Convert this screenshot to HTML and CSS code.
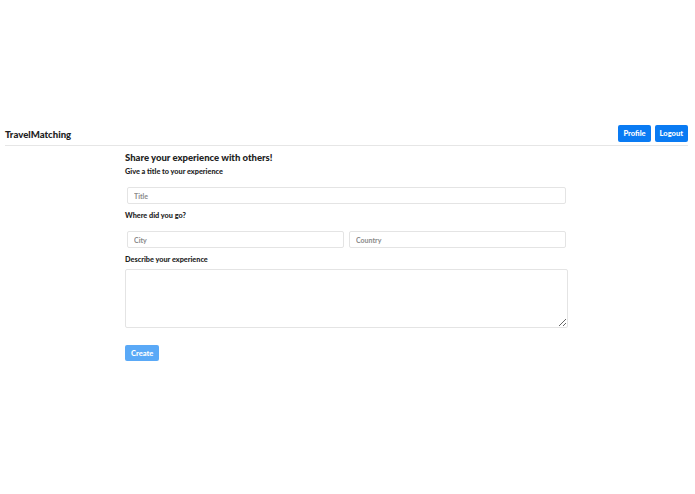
FILE: index.html
```html
<!DOCTYPE html>
<html>
<head>
<meta charset="utf-8">
<link rel="stylesheet" href="styles.css">
</head>
<body>
<div class="top-space"></div>
<nav class="navbar">
  <div class="brand">TravelMatching</div>
  <div class="nav-actions">
    <button class="btn btn-primary">Profile</button>
    <button class="btn btn-primary">Logout</button>
  </div>
</nav>
<main class="content">
  <h2 class="title">Share your experience with others!</h2>
  <label class="label">Give a title to your experience</label>
  <div class="field-row single">
    <input class="input" type="text" placeholder="Title">
  </div>
  <label class="label">Where did you go?</label>
  <div class="field-row double">
    <input class="input" type="text" placeholder="City">
    <input class="input" type="text" placeholder="Country">
  </div>
  <label class="label">Describe your experience</label>
  <textarea class="textarea"></textarea>
  <button class="btn btn-create">Create</button>
</main>
</body>
</html>
```
FILE: styles.css
```css
* { box-sizing: border-box; }
html, body { margin: 0; padding: 0; background: #fff; }
body {
  font-family: Lato, "Noto Sans", sans-serif;
  color: #212529;
}
.top-space { height: 122px; }
.navbar {
  display: flex;
  align-items: center;
  justify-content: space-between;
  margin: 0 7px 0 5px;
  height: 24px;
  border-bottom: 1px solid #e6e6e6;
  padding-bottom: 1px;
}
.brand {
  font-weight: 900;
  font-size: 9.6px;
  color: #222;
  padding-top: 3px;
}
.nav-actions { display: flex; gap: 4px; }
.btn {
  font-family: Lato, "Noto Sans", sans-serif;
  font-weight: 900;
  font-size: 7.5px;
  color: #fff;
  border: none;
  border-radius: 2px;
  cursor: pointer;
}
.btn-primary {
  background: #0a7bf3;
  height: 17px;
  padding: 0 5px;
}
.content {
  width: 443px;
  margin-left: 125px;
  display: flex;
  flex-direction: column;
  align-items: stretch;
}
.title {
  margin: 5px 0 0 0;
  font-size: 9.5px;
  font-weight: 900;
  color: #222;
  line-height: 14px;
}
.label {
  font-size: 7.3px;
  font-weight: 900;
  color: #222;
  line-height: 10px;
}
.title + .label { margin-top: 2px; }
.field-row {
  display: flex;
  gap: 5px;
  padding: 0 2px;
  margin: 10px 0 7px 0;
}
.field-row .input { flex: 1; min-width: 0; }
.input {
  height: 17px;
  border: 1px solid #e4e4e4;
  border-radius: 2px;
  padding: 0 6px;
  font-family: Lato, "Noto Sans", sans-serif;
  font-weight: 700;
  font-size: 7px;
  color: #333;
  background: #fff;
  outline: none;
}
.input::placeholder { color: #8a8a8a; }
.double { margin-bottom: 7px; }
.textarea {
  margin-top: 4px;
  height: 59px;
  border: 1px solid #e4e4e4;
  border-radius: 2px;
  resize: vertical;
  outline: none;
}
.btn-create {
  align-self: flex-start;
  margin-top: 17px;
  background: #5aa9f7;
  height: 16px;
  padding: 0 6px;
}
```
